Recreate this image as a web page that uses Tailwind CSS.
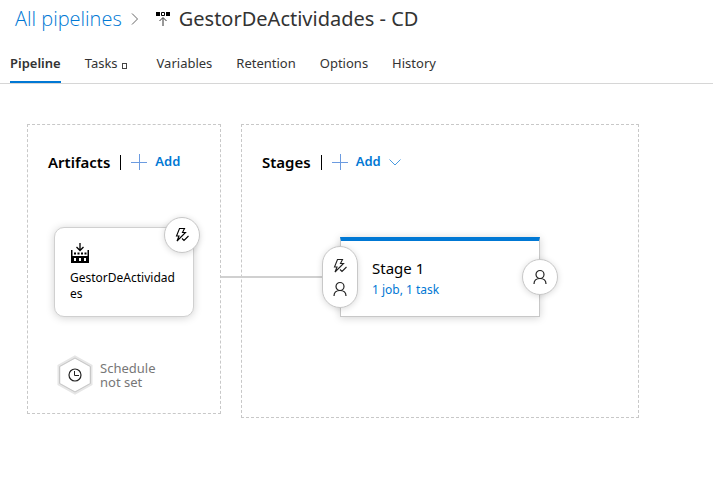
<!DOCTYPE html>
<html lang="en">
<head>
<meta charset="utf-8">
<title>GestorDeActividades - CD</title>
<script src="https://cdn.jsdelivr.net/npm/@tailwindcss/browser@4"></script>
</head>
<body class="min-h-screen bg-white font-['Segoe_UI','Noto_Sans',sans-serif] text-[13px] text-[#333]">
<svg class="hidden" aria-hidden="true">
  <symbol id="bolt" viewBox="0 0 16 16" fill="none" stroke="currentColor">
    <path d="M5.500 1.500h5L8.500 5.500h3L3 14l2-5H2.500zM8 11.500l2 2 4.500-4.500" stroke-width="1.1"/>
  </symbol>
  <symbol id="person" viewBox="0 0 16 16" fill="none" stroke="currentColor" stroke-width="1.2">
    <circle cx="8" cy="5.500" r="4"/><path d="M2 15c0-3.500 2.500-5.500 6-5.500s6 2 6 5.500"/>
  </symbol>
  <symbol id="plus" viewBox="0 0 16 16" fill="none" stroke="currentColor"><path d="M8.500 0v16M0 8.500h16"/></symbol>
</svg>
<header>
  <nav class="flex h-[38px] items-center pl-[15px] text-xl" aria-label="Breadcrumb">
    <a href="#" class="font-['Open_Sans',sans-serif] font-light text-[#0078d4]">All pipelines</a>
    <svg class="ml-[9px] h-3 w-2" viewBox="0 0 8 12" fill="none" stroke="#666"><path d="M1 .5 6.500 6 1 11.500"/></svg>
    <svg class="ml-4 h-4 w-4" viewBox="0 0 16 16"><path d="M1 1h4v4H1zM11 1h4v4h-4z" fill="#000"/><path d="M6.500 1.500h3v3h-3z" fill="none" stroke="#000"/><path d="M8 15V7M4.500 10 8 6.500l3.500 3.500" fill="none" stroke="#333"/></svg>
    <h1 class="ml-2">GestorDeActividades - CD</h1>
  </nav>
  <nav class="flex h-[46px] gap-6 border-b border-[#d6d6d6] pl-[10px]" aria-label="Sections">
    <a href="#" class="flex h-[45px] items-center border-b-2 border-[#0078d4] pt-2 font-semibold">Pipeline</a>
    <a href="#" class="flex h-[45px] items-center gap-1 pt-[6px]">Tasks <span class="mt-1 mr-[6px] h-[6px] w-[5px] border border-[#444]"></span></a>
    <a href="#" class="flex h-[45px] items-center pt-[6px]">Variables</a>
    <a href="#" class="flex h-[45px] items-center pt-[6px]">Retention</a>
    <a href="#" class="flex h-[45px] items-center pt-[6px]">Options</a>
    <a href="#" class="flex h-[45px] items-center pt-[6px]">History</a>
  </nav>
</header>
<main class="flex items-start gap-5 px-[27px] pt-10">
  <section class="w-[194px] border border-dashed border-[#c8c8c8] pb-[18px]">
    <div class="flex h-[74px] items-center pl-5">
      <h2 class="text-[15px] font-semibold text-black">Artifacts</h2>
      <span class="ml-[10px] h-[15px] w-px bg-black"></span>
      <button class="ml-[10px] flex items-center gap-2 font-semibold text-[#0078d4]"><svg class="h-4 w-4 text-[#6b9be0]"><use href="#plus"/></svg>Add</button>
    </div>
    <article class="relative mt-7 ml-[26px] h-[90px] w-[140px] rounded-[10px] border border-[#d0d0d0] bg-white px-[15px] pt-[15px] text-xs text-black shadow-[0_1px_8px_rgba(0,0,0,0.18)]">
      <svg class="h-5 w-5" viewBox="0 0 20 20">
        <path d="M1 7h1.500v6h15V7H19v13H1z" fill="#000"/>
        <path d="M4 9.500h2v2H4zM7.500 9.500h2v2h-2zM11 9.500h2v2h-2zM14.500 9.500h2v2h-2z" fill="#000"/>
        <path d="M4 15h2v3H4zM9 15h2v3H9zM14 15h2v3h-2z" fill="#fff"/>
        <path d="M10 0v7M6.500 4 10 7.500 13.500 4" fill="none" stroke="#000" stroke-width="1.300"/>
      </svg>
      <p class="mt-[7px] leading-4 break-all">GestorDeActividades</p>
      <button aria-label="Continuous deployment trigger" class="absolute -top-[11px] -right-[7px] flex h-9 w-9 items-center justify-center rounded-full border border-[#c8c8c8] bg-white shadow-[0_1px_6px_rgba(0,0,0,0.15)]"><svg class="h-4 w-4"><use href="#bolt"/></svg></button>
    </article>
    <button class="mt-[38px] ml-[29px] flex items-center gap-[7px] text-left text-[13px] leading-[14px] text-[#777]">
      <svg class="h-10 w-9" viewBox="0 0 36 40" fill="none"><path d="m18 2 16 9v18l-16 9-16-9V11z" fill="#fff" stroke="#e6e6e6" stroke-width="3"/><path d="m18 3 15.500 8.500v17L18 37 2.500 28.500v-17z" stroke="#c8c8c8"/><circle cx="18" cy="20" r="6" stroke="#222" stroke-width="1.200"/><path d="M17.500 16v4.500H22" stroke="#222"/></svg>
      <span>Schedule<br>not set</span>
    </button>
  </section>
  <section class="relative h-[294px] w-[398px] border border-dashed border-[#c8c8c8]">
    <div class="flex h-[74px] items-center pl-5">
      <h2 class="text-[15px] font-semibold text-black">Stages</h2>
      <span class="ml-[10px] h-[15px] w-px bg-black"></span>
      <button class="ml-[10px] flex items-center gap-2 font-semibold text-[#0078d4]"><svg class="h-4 w-4 text-[#6b9be0]"><use href="#plus"/></svg>Add<svg class="h-[7px] w-3" viewBox="0 0 12 7" fill="none" stroke="#4a9be0"><path d="m.5.500 5.500 5.500 5.500-5.500"/></svg></button>
    </div>
    <span class="absolute top-[151px] -left-[21px] h-[2px] w-[102px] bg-[#d0d0d0]"></span>
    <article class="relative mt-[38px] ml-[98px] h-20 w-[200px] border border-t-4 border-[#c8c8c8] border-t-[#0078d4] bg-white pt-[17px] pl-[31px] shadow-[0_1px_8px_rgba(0,0,0,0.18)]">
      <h3 class="text-[15px] leading-5 text-black">Stage 1</h3>
      <a href="#" class="block text-xs leading-6 text-[#0078d4]">1 job, 1 task</a>
      <button aria-label="Pre-deployment conditions" class="absolute top-[5px] -left-[19px] flex h-[62px] w-9 flex-col items-center justify-center gap-[7px] rounded-full border border-[#c8c8c8] bg-white text-[#222] shadow-[0_1px_6px_rgba(0,0,0,0.15)]"><svg class="h-4 w-4"><use href="#bolt"/></svg><svg class="h-4 w-4"><use href="#person"/></svg></button>
      <button aria-label="Post-deployment conditions" class="absolute top-[18px] -right-[19px] flex h-9 w-9 items-center justify-center rounded-full border border-[#c8c8c8] bg-white text-[#222] shadow-[0_1px_6px_rgba(0,0,0,0.15)]"><svg class="h-4 w-4"><use href="#person"/></svg></button>
    </article>
  </section>
</main>
</body>
</html>
